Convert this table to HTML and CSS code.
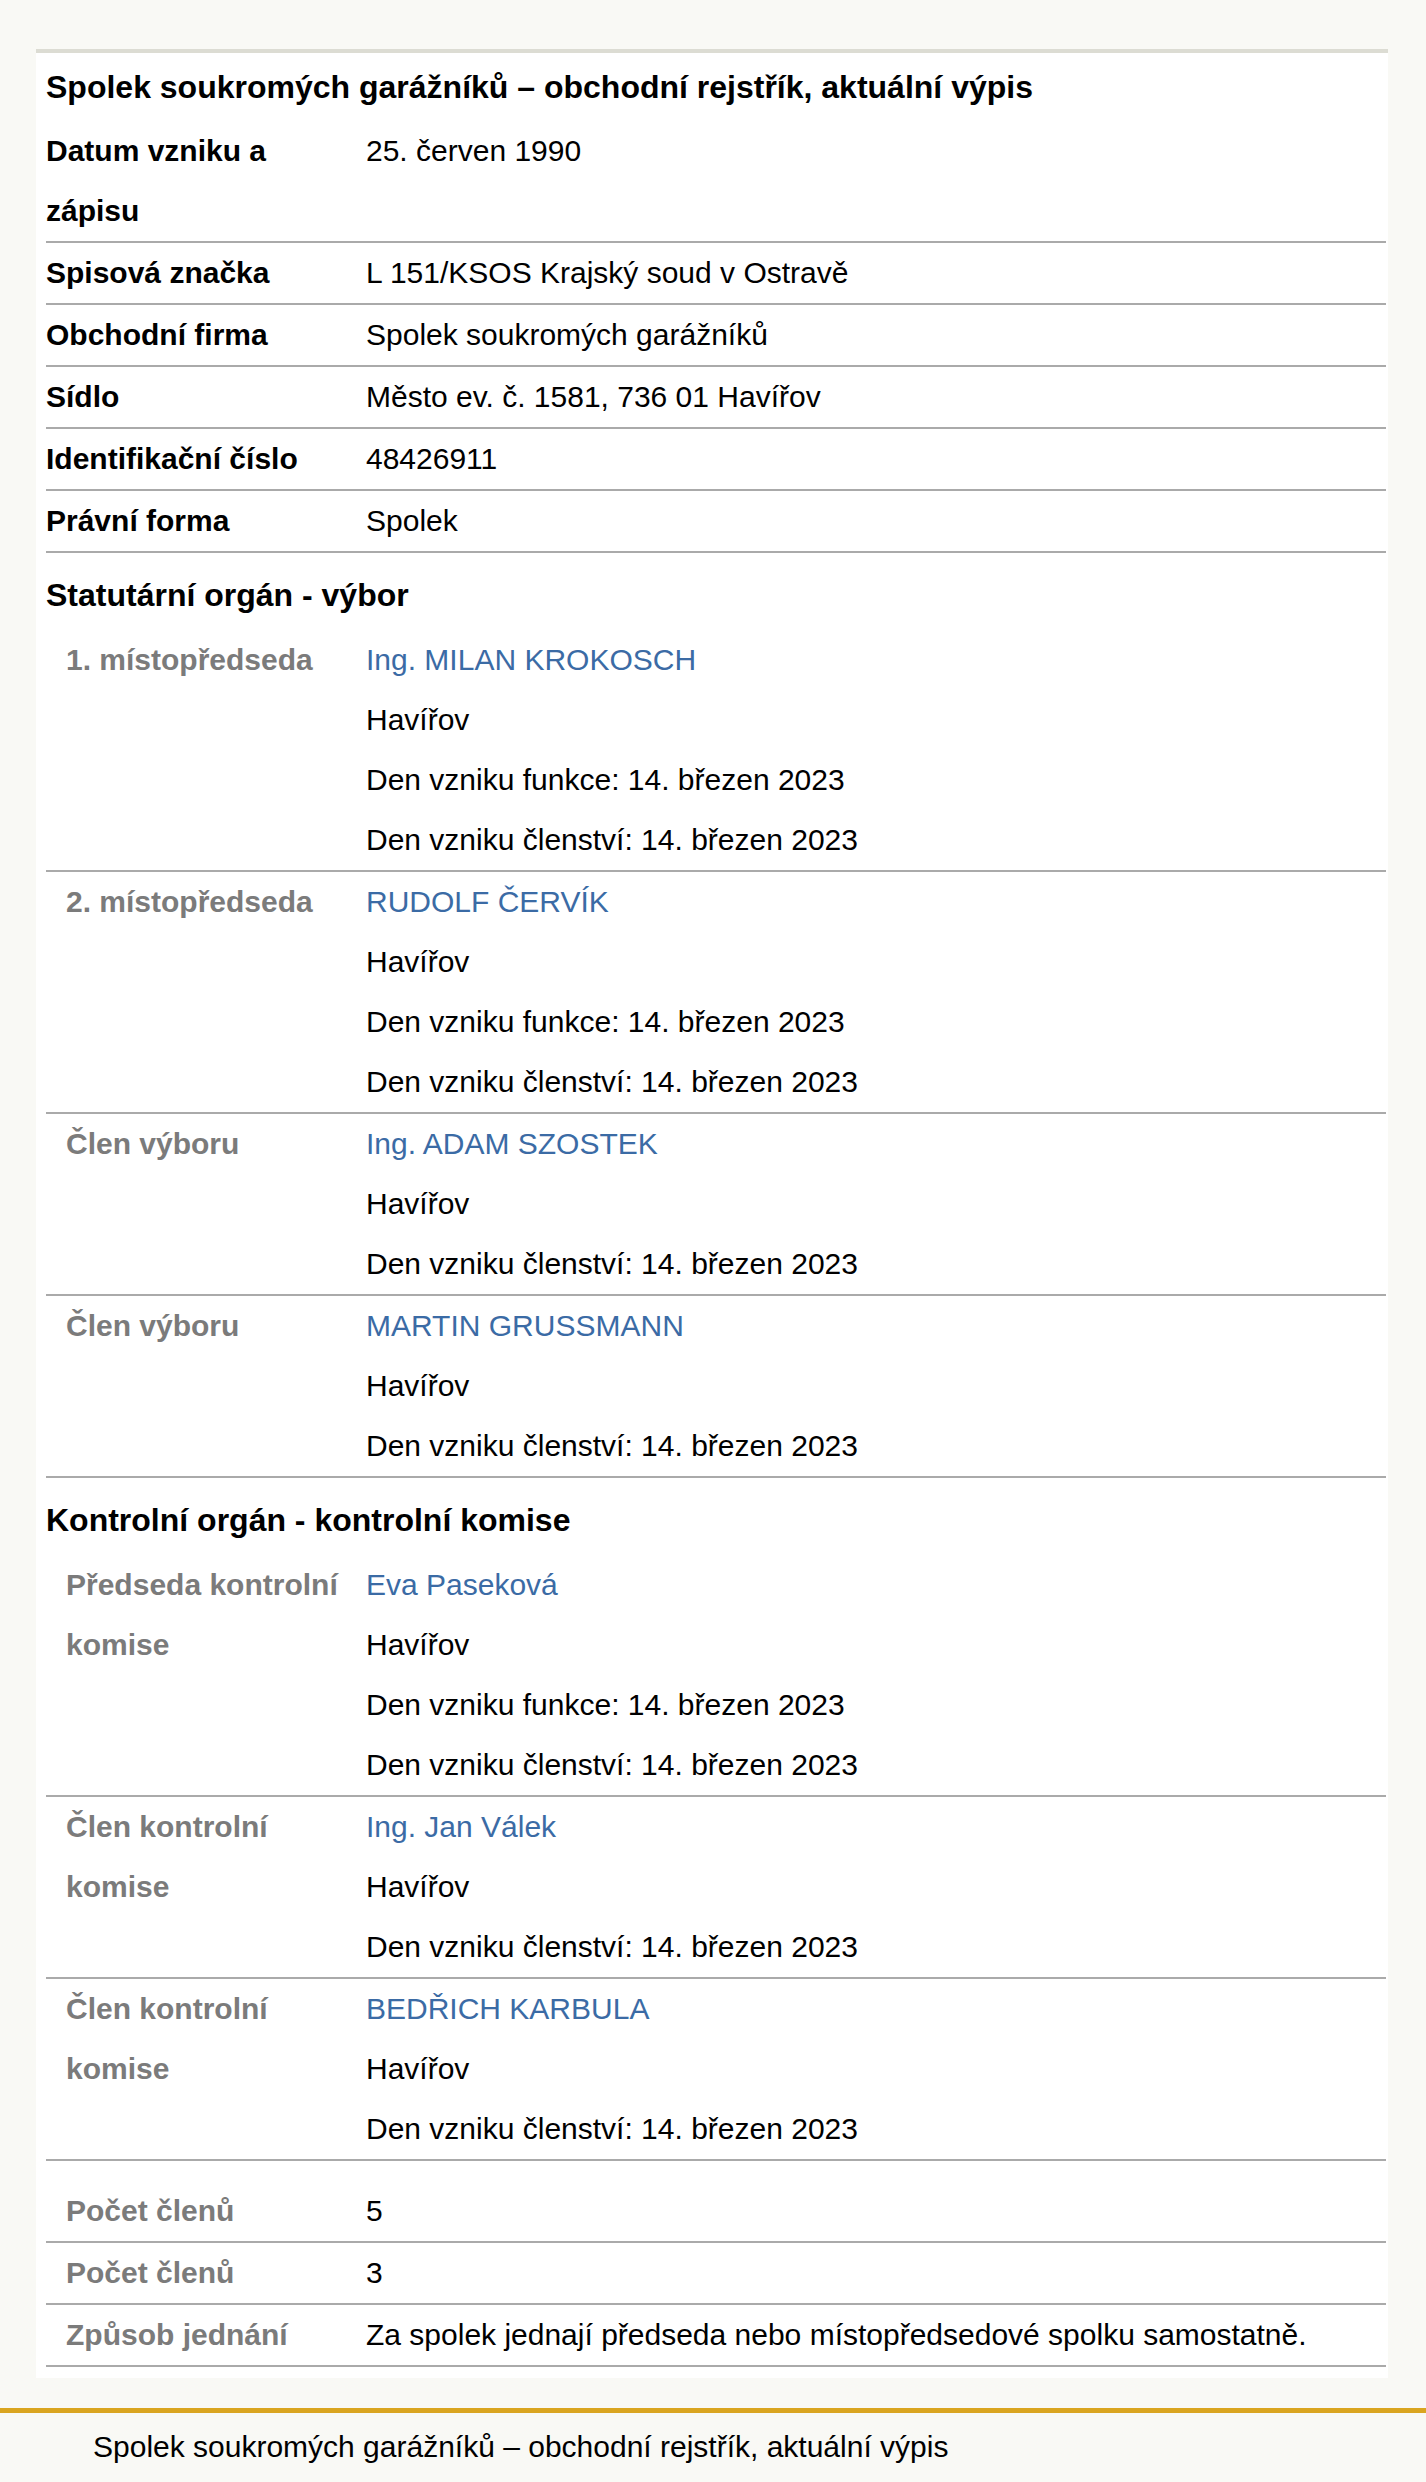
FILE: index.html
```html
<!DOCTYPE html>
<html lang="cs">

<head>
  <meta charset="UTF-8" />
  <title>Spolek soukromých garážníků – obchodní rejstřík, aktuální výpis</title>
  <link rel="stylesheet" href="styles.css">
</head>

<body>
  <div class="page">
    <div class="card">
      <div class="title">Spolek soukromých garážníků – obchodní rejstřík, aktuální výpis</div>

      <div class="row">
        <div class="label">Datum vzniku a zápisu</div>
        <div class="value">25. červen 1990</div>
      </div>
      <div class="row">
        <div class="label">Spisová značka</div>
        <div class="value">L 151/KSOS Krajský soud v Ostravě</div>
      </div>
      <div class="row">
        <div class="label">Obchodní firma</div>
        <div class="value">Spolek soukromých garážníků</div>
      </div>
      <div class="row">
        <div class="label">Sídlo</div>
        <div class="value">Město ev. č. 1581, 736 01 Havířov</div>
      </div>
      <div class="row">
        <div class="label">Identifikační číslo</div>
        <div class="value">48426911</div>
      </div>
      <div class="row">
        <div class="label">Právní forma</div>
        <div class="value">Spolek</div>
      </div>

      <div class="section">Statutární orgán - výbor</div>

      <div class="row">
        <div class="label sub">1. místopředseda</div>
        <div class="value">
          <a href="#">Ing. MILAN KROKOSCH</a>
          <div>Havířov</div>
          <div>Den vzniku funkce: 14. březen 2023</div>
          <div>Den vzniku členství: 14. březen 2023</div>
        </div>
      </div>
      <div class="row">
        <div class="label sub">2. místopředseda</div>
        <div class="value">
          <a href="#">RUDOLF ČERVÍK</a>
          <div>Havířov</div>
          <div>Den vzniku funkce: 14. březen 2023</div>
          <div>Den vzniku členství: 14. březen 2023</div>
        </div>
      </div>
      <div class="row">
        <div class="label sub">Člen výboru</div>
        <div class="value">
          <a href="#">Ing. ADAM SZOSTEK</a>
          <div>Havířov</div>
          <div>Den vzniku členství: 14. březen 2023</div>
        </div>
      </div>
      <div class="row">
        <div class="label sub">Člen výboru</div>
        <div class="value">
          <a href="#">MARTIN GRUSSMANN</a>
          <div>Havířov</div>
          <div>Den vzniku členství: 14. březen 2023</div>
        </div>
      </div>

      <div class="section">Kontrolní orgán - kontrolní komise</div>

      <div class="row">
        <div class="label sub">Předseda kontrolní komise</div>
        <div class="value">
          <a href="#">Eva Paseková</a>
          <div>Havířov</div>
          <div>Den vzniku funkce: 14. březen 2023</div>
          <div>Den vzniku členství: 14. březen 2023</div>
        </div>
      </div>
      <div class="row">
        <div class="label sub">Člen kontrolní komise</div>
        <div class="value">
          <a href="#">Ing. Jan Válek</a>
          <div>Havířov</div>
          <div>Den vzniku členství: 14. březen 2023</div>
        </div>
      </div>
      <div class="row">
        <div class="label sub">Člen kontrolní komise</div>
        <div class="value">
          <a href="#">BEDŘICH KARBULA</a>
          <div>Havířov</div>
          <div>Den vzniku členství: 14. březen 2023</div>
        </div>
      </div>

      <div class="spacer"></div>

      <div class="row">
        <div class="label sub">Počet členů</div>
        <div class="value">5</div>
      </div>
      <div class="row">
        <div class="label sub">Počet členů</div>
        <div class="value">3</div>
      </div>
      <div class="row">
        <div class="label sub">Způsob jednání</div>
        <div class="value">Za spolek jednají předseda nebo místopředsedové spolku samostatně.</div>
      </div>
    </div>
  </div>

  <footer class="footer">Spolek soukromých garážníků – obchodní rejstřík, aktuální výpis</footer>
</body>

</html>
```

FILE: styles.css
```css
body {
  margin: 0;
  background-color: #f9f9f5;
  font-family: "Liberation Sans", Arial, sans-serif;
  font-size: 30px;
  line-height: 60px;
  color: #000;
}

.page {
  padding: 49px 38px 30px 36px;
}

.card {
  background-color: #fff;
  border-top: 4px solid #dcdcd3;
  padding: 0 2px 11px 10px;
}

.title {
  font-size: 32px;
  font-weight: bold;
  line-height: 64px;
  padding: 2px 0;
}

.section {
  font-size: 32px;
  font-weight: bold;
  line-height: 64px;
  padding: 10px 0 3px;
}

.row {
  display: grid;
  grid-template-columns: 320px 1fr;
  border-bottom: 2px solid #aaa;
}

.label {
  font-weight: bold;
  padding-right: 10px;
}

.label.sub {
  padding-left: 20px;
  color: #7b7b7b;
}

.value a {
  display: block;
  color: #3b6ba5;
  text-decoration: none;
}

.spacer {
  height: 20px;
}

.footer {
  border-top: 5px solid #daa520;
  padding: 4px 0 0 93px;
}
```
